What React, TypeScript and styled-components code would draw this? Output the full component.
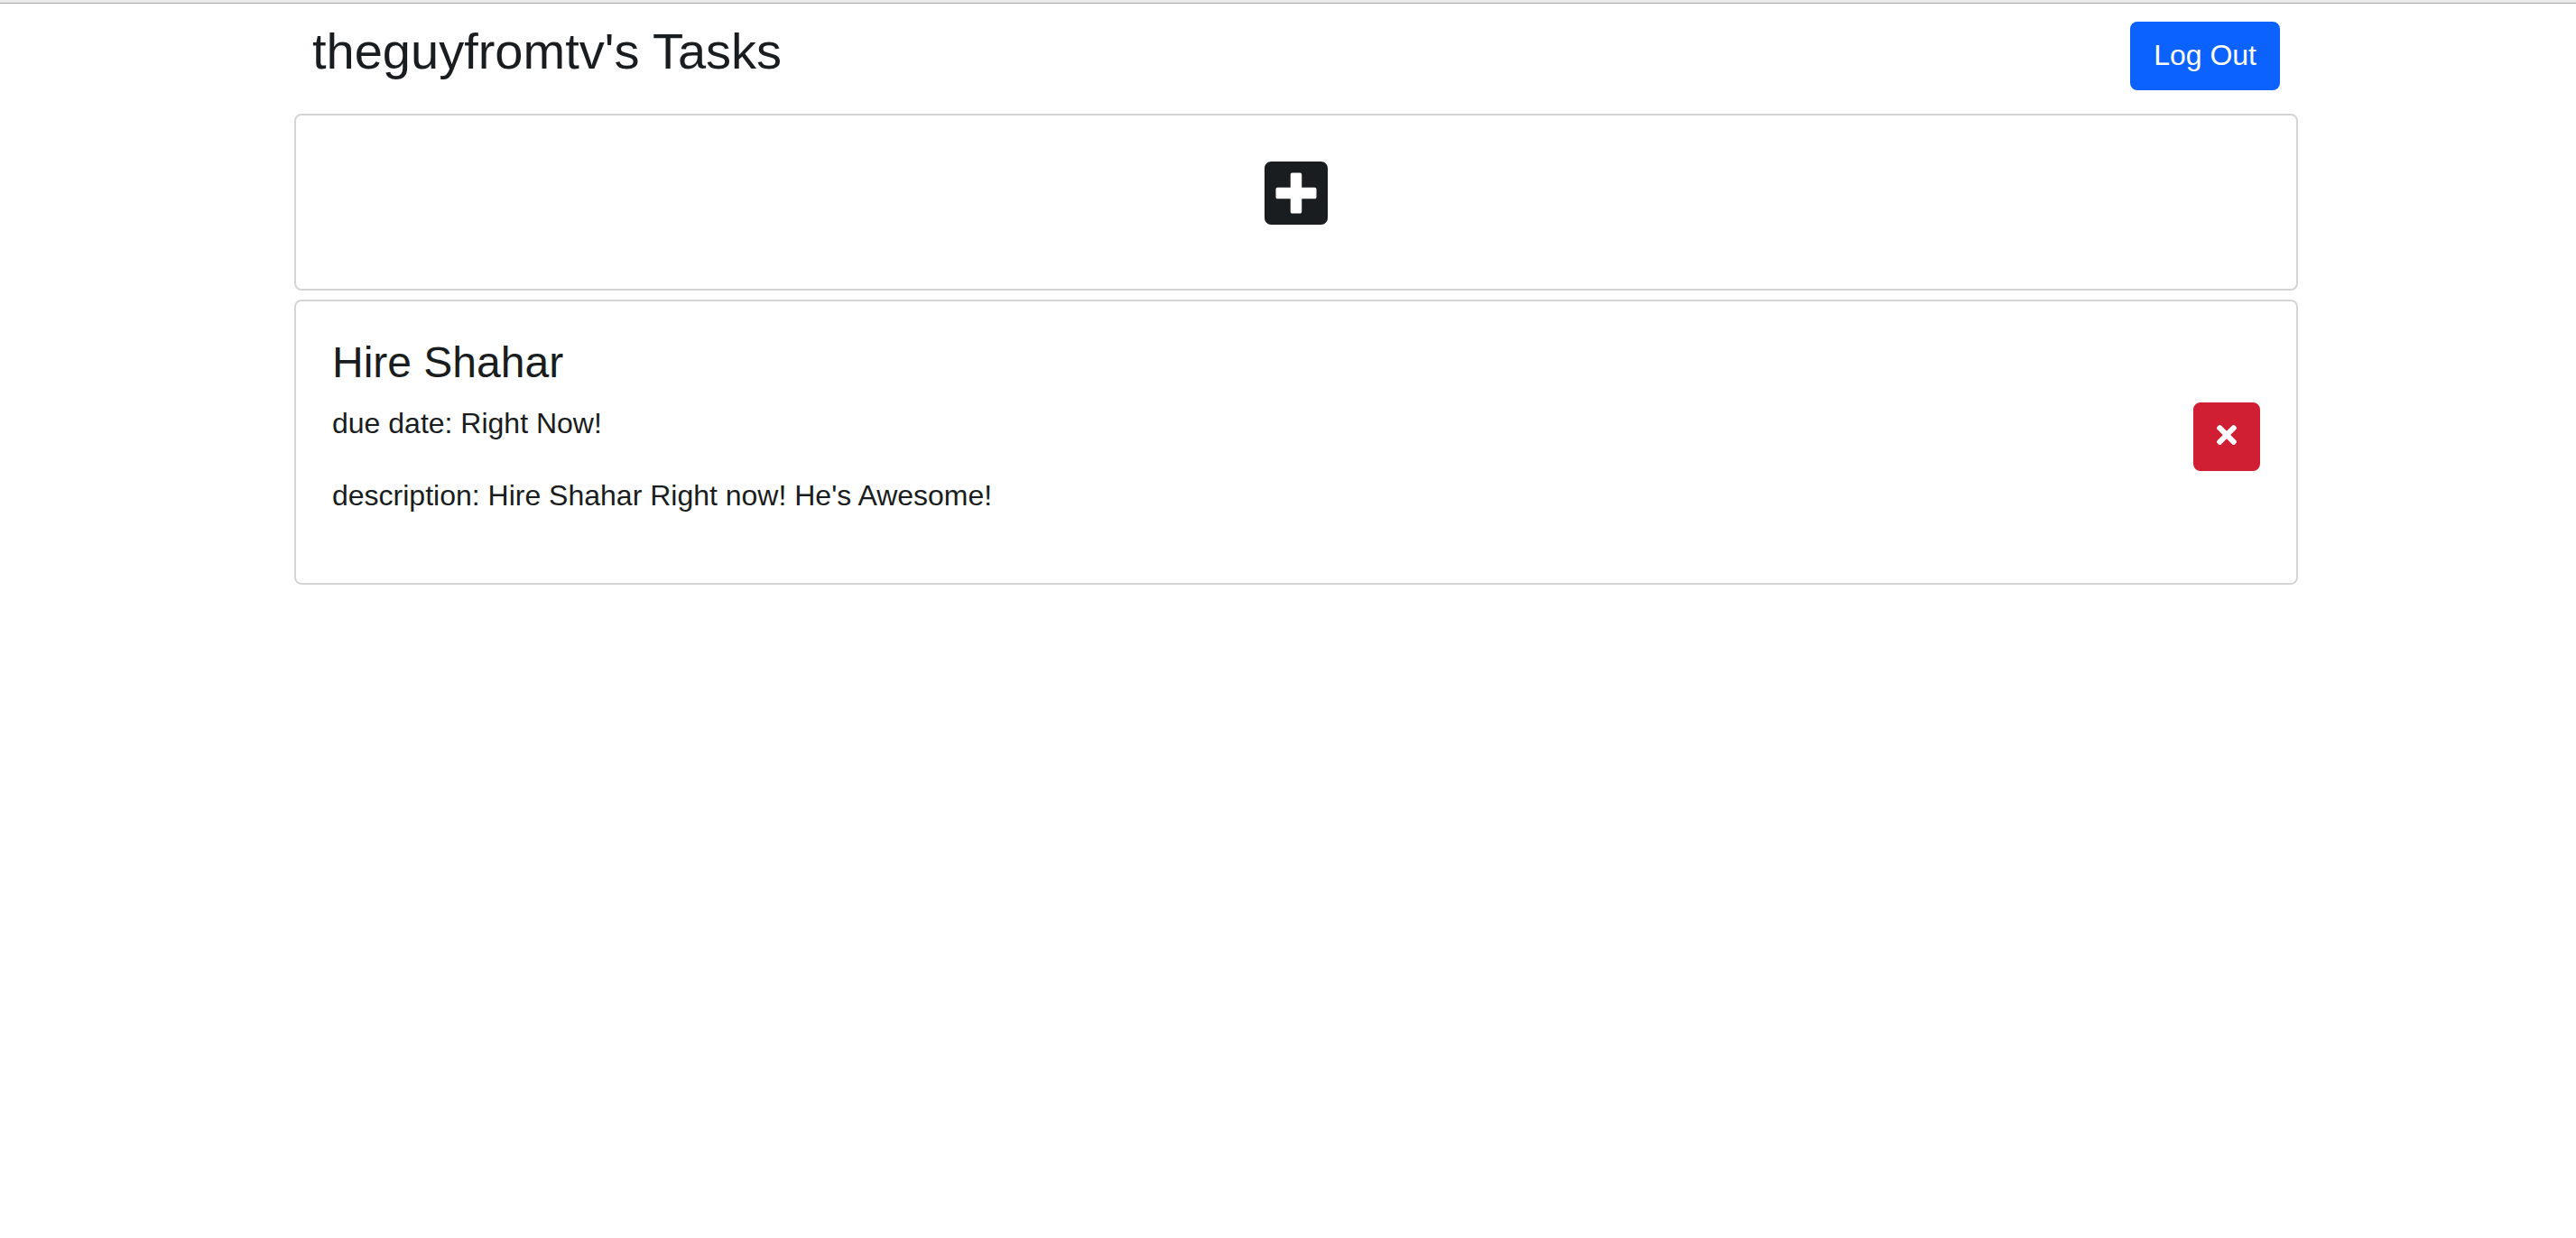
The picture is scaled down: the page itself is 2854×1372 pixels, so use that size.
import React from "react";
import styled, { createGlobalStyle } from "styled-components";
import { FaPlusSquare, FaTimes } from "react-icons/fa";

const GlobalStyle = createGlobalStyle`
  *, *::before, *::after {
    box-sizing: border-box;
  }

  body {
    margin: 0;
    background: #fff;
    color: #191d20;
    font-family: "Liberation Sans", Helvetica, Arial, sans-serif;
    font-size: 32px;
    line-height: 46px;
  }
`;

const TopRule = styled.div`
  height: 4px;
  background: #ececec;
  border-bottom: 1px solid #a6a6a6;
`;

const Page = styled.div`
  padding-left: 18px;
`;

const Container = styled.main`
  width: 100%;
  max-width: 2280px;
  margin: 0 auto;
  padding: 0 30px;
`;

const Header = styled.header`
  display: flex;
  align-items: flex-start;
  justify-content: space-between;
  padding: 20px 20px 26px;
`;

const PageTitle = styled.h1`
  margin: 0;
  font-size: 56px;
  line-height: 66px;
  font-weight: 400;
`;

const Button = styled.button<{ $color: string }>`
  display: flex;
  align-items: center;
  justify-content: center;
  flex-shrink: 0;
  padding: 12px 24px 14px;
  border: 2px solid ${({ $color }) => $color};
  border-radius: 8px;
  background: ${({ $color }) => $color};
  color: #fff;
  font: inherit;
  cursor: pointer;
`;

const DeleteButton = styled(Button)`
  height: 76px;
  padding: 8px 24px 12px;
  margin-bottom: 12px;

  svg {
    width: 22px;
    height: 32px;
  }
`;

const CardList = styled.div`
  display: flex;
  flex-direction: column;
  gap: 10px;
`;

const Card = styled.section`
  display: flex;
  align-items: center;
  justify-content: space-between;
  padding: 40px;
  border: 2px solid #d5d5d5;
  border-radius: 8px;
`;

const AddButton = styled.button`
  display: flex;
  margin: 0 auto;
  padding: 6px 0 26px;
  border: 0;
  background: none;
  color: inherit;
  cursor: pointer;

  svg {
    width: 70px;
    height: 80px;
  }
`;

const TaskTitle = styled.h2`
  margin: 0 0 16px;
  font-size: 48px;
  line-height: 56px;
  font-weight: 400;
`;

const TaskText = styled.p`
  margin: 0 0 34px;
`;

interface Task {
  title: string;
  due: string;
  description: string;
}

const tasks: Task[] = [
  {
    title: "Hire Shahar",
    due: "Right Now!",
    description: "Hire Shahar Right now! He's Awesome!",
  },
];

export default function App() {
  return (
    <>
      <GlobalStyle />
      <TopRule />
      <Page>
        <Container>
          <Header>
            <PageTitle>theguyfromtv's Tasks</PageTitle>
            <Button type="button" $color="#0b62ff">
              Log Out
            </Button>
          </Header>
          <CardList>
            <Card>
              <AddButton type="button" aria-label="Add task">
                <FaPlusSquare />
              </AddButton>
            </Card>
            {tasks.map((task) => (
              <Card key={task.title}>
                <div>
                  <TaskTitle>{task.title}</TaskTitle>
                  <TaskText>due date: {task.due}</TaskText>
                  <TaskText>description: {task.description}</TaskText>
                </div>
                <DeleteButton type="button" $color="#d01f33" aria-label="Delete task">
                  <FaTimes />
                </DeleteButton>
              </Card>
            ))}
          </CardList>
        </Container>
      </Page>
    </>
  );
}
